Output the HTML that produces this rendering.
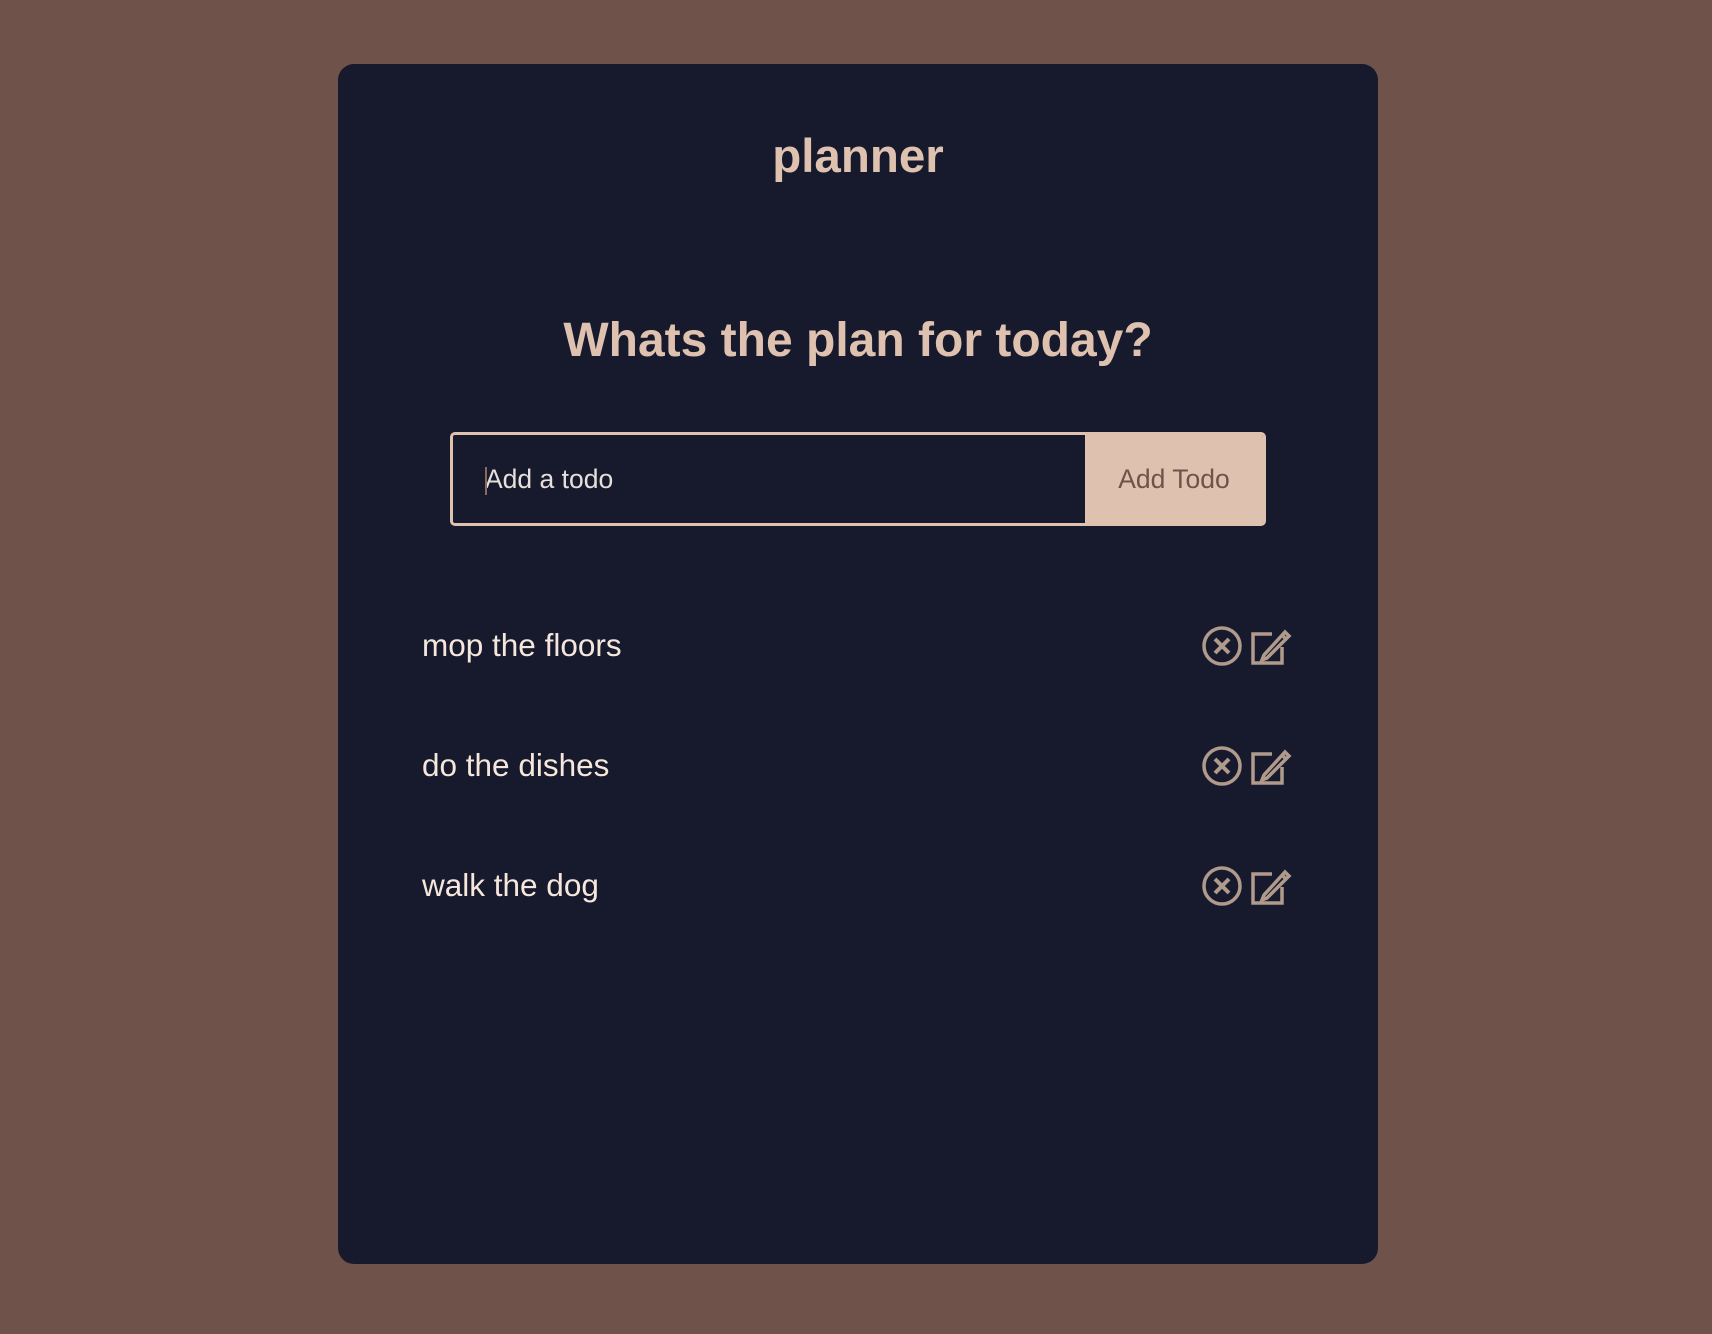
<!DOCTYPE html>
<html><head><meta charset="utf-8"><style>
html,body{margin:0;padding:0;width:1712px;height:1334px;background:#6f534a;overflow:hidden;font-family:"Liberation Sans",Arial,sans-serif}
.card{position:absolute;left:338px;top:64px;width:1040px;height:1200px;background:#171a2c;border-radius:16px}
.t{position:absolute;left:0;width:100%;text-align:center;color:#dfc1b0;font-weight:bold}
.form{position:absolute;left:112px;top:368px;width:816px;height:94px;box-sizing:border-box;border:3px solid #dfc1b0;border-radius:5px;background:#171a2c}
.inp{position:absolute;left:32px;top:0;height:88px;line-height:88px;color:#e6e0dc;font-size:26.5px}
.cur{position:absolute;left:32px;top:32px;width:2px;height:28px;background:#8a6a5a}
.btn{position:absolute;right:0;top:-3px;width:178px;height:94px;background:#dfc1b0;color:#6f534a;font-size:26.5px;line-height:94px;text-align:center;border-radius:0 5px 5px 0}
.item{position:absolute;left:84px;color:#f6e7dc;font-size:31.5px;line-height:40px}
.ic{position:absolute;left:864px}
</style></head><body>
<div class="card">
<div class="t" style="top:65px;font-size:47.5px">planner</div>
<div class="t" style="top:249px;font-size:48px">Whats the plan for today?</div>
<div class="form"><div class="inp">Add a todo</div><div class="cur"></div><div class="btn">Add Todo</div></div>
<div class="item" style="top:561px">mop the floors</div>
<div class="item" style="top:681px">do the dishes</div>
<div class="item" style="top:801px">walk the dog</div>
<svg class="ic" style="top:560px" width="100" height="44" viewBox="0 0 100 44"><g fill="none" stroke="#b09a8c" stroke-width="3.5"><circle cx="20" cy="22" r="18"/><path d="M13 15L27 29M27 15L13 29" stroke-width="4"/><path d="M70 10H51V39H80V23"/><path d="M62 31L60 36L65 34L87 12L83 8Z"/><path d="M80 11L84 15"/></g></svg>
<svg class="ic" style="top:680px" width="100" height="44" viewBox="0 0 100 44"><g fill="none" stroke="#b09a8c" stroke-width="3.5"><circle cx="20" cy="22" r="18"/><path d="M13 15L27 29M27 15L13 29" stroke-width="4"/><path d="M70 10H51V39H80V23"/><path d="M62 31L60 36L65 34L87 12L83 8Z"/><path d="M80 11L84 15"/></g></svg>
<svg class="ic" style="top:800px" width="100" height="44" viewBox="0 0 100 44"><g fill="none" stroke="#b09a8c" stroke-width="3.5"><circle cx="20" cy="22" r="18"/><path d="M13 15L27 29M27 15L13 29" stroke-width="4"/><path d="M70 10H51V39H80V23"/><path d="M62 31L60 36L65 34L87 12L83 8Z"/><path d="M80 11L84 15"/></g></svg>
</div>
</body></html>
